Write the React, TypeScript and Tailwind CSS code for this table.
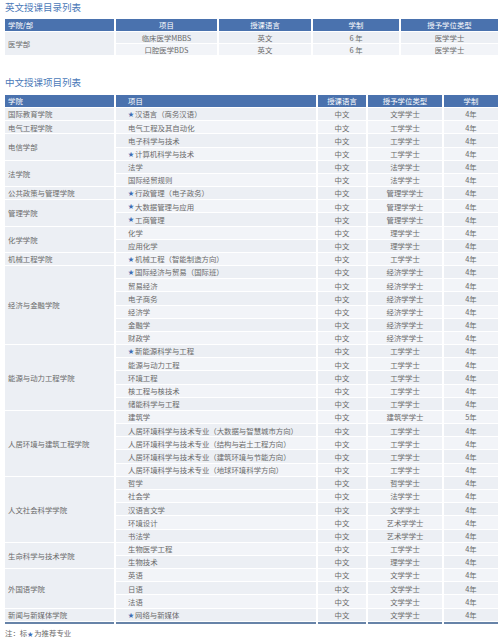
import React from "react";

type Row = { item: string; star?: boolean; degree: string; years?: string };
type Group = { school: string; rows: Row[] };

const groups: Group[] = [
  { school: "国际教育学院", rows: [{ item: "汉语言（商务汉语）", star: true, degree: "文学学士" }] },
  { school: "电气工程学院", rows: [{ item: "电气工程及其自动化", degree: "工学学士" }] },
  {
    school: "电信学部",
    rows: [
      { item: "电子科学与技术", degree: "工学学士" },
      { item: "计算机科学与技术", star: true, degree: "工学学士" },
    ],
  },
  {
    school: "法学院",
    rows: [
      { item: "法学", degree: "法学学士" },
      { item: "国际经贸规则", degree: "法学学士" },
    ],
  },
  { school: "公共政策与管理学院", rows: [{ item: "行政管理（电子政务）", star: true, degree: "管理学学士" }] },
  {
    school: "管理学院",
    rows: [
      { item: "大数据管理与应用", star: true, degree: "管理学学士" },
      { item: "工商管理", star: true, degree: "管理学学士" },
    ],
  },
  {
    school: "化学学院",
    rows: [
      { item: "化学", degree: "理学学士" },
      { item: "应用化学", degree: "理学学士" },
    ],
  },
  { school: "机械工程学院", rows: [{ item: "机械工程（智能制造方向）", star: true, degree: "工学学士" }] },
  {
    school: "经济与金融学院",
    rows: [
      { item: "国际经济与贸易（国际班）", star: true, degree: "经济学学士" },
      { item: "贸易经济", degree: "经济学学士" },
      { item: "电子商务", degree: "经济学学士" },
      { item: "经济学", degree: "经济学学士" },
      { item: "金融学", degree: "经济学学士" },
      { item: "财政学", degree: "经济学学士" },
    ],
  },
  {
    school: "能源与动力工程学院",
    rows: [
      { item: "新能源科学与工程", star: true, degree: "工学学士" },
      { item: "能源与动力工程", degree: "工学学士" },
      { item: "环境工程", degree: "工学学士" },
      { item: "核工程与核技术", degree: "工学学士" },
      { item: "储能科学与工程", degree: "工学学士" },
    ],
  },
  {
    school: "人居环境与建筑工程学院",
    rows: [
      { item: "建筑学", degree: "建筑学学士", years: "5年" },
      { item: "人居环境科学与技术专业（大数据与智慧城市方向）", degree: "工学学士" },
      { item: "人居环境科学与技术专业（结构与岩土工程方向）", degree: "工学学士" },
      { item: "人居环境科学与技术专业（建筑环境与节能方向）", degree: "工学学士" },
      { item: "人居环境科学与技术专业（地球环境科学方向）", degree: "工学学士" },
    ],
  },
  {
    school: "人文社会科学学院",
    rows: [
      { item: "哲学", degree: "哲学学士" },
      { item: "社会学", degree: "法学学士" },
      { item: "汉语言文学", degree: "文学学士" },
      { item: "环境设计", degree: "艺术学学士" },
      { item: "书法学", degree: "艺术学学士" },
    ],
  },
  {
    school: "生命科学与技术学院",
    rows: [
      { item: "生物医学工程", degree: "工学学士" },
      { item: "生物技术", degree: "理学学士" },
    ],
  },
  {
    school: "外国语学院",
    rows: [
      { item: "英语", degree: "文学学士" },
      { item: "日语", degree: "文学学士" },
      { item: "法语", degree: "文学学士" },
    ],
  },
  { school: "新闻与新媒体学院", rows: [{ item: "网络与新媒体", star: true, degree: "文学学士" }] },
];

const spanClass: Record<number, string> = {
  1: "row-span-1",
  2: "row-span-2",
  3: "row-span-3",
  5: "row-span-5",
  6: "row-span-6",
};

const font = "font-['Noto_Sans_CJK_SC','Noto_Sans',sans-serif]";
const head = "bg-[#4a72ae] text-white flex items-center";
const cellA = "bg-[#eceff4]";
const cellB = "bg-[#f2f4f8]";

const Star = () => <span className="text-[#3f6db3] text-[6px] mr-[1px]">★</span>;

export default function App() {
  let idx = 0;
  return (
    <div className={`${font} w-[500px] h-[640px] bg-white text-[#6a6a6a] text-[7.4px] leading-none pl-[5px] pr-[2px]`}>
      <h2 className="text-[9.5px] text-[#4b79b8] h-[17px] pt-[2px] leading-[10px]">英文授课目录列表</h2>

      <div className="grid grid-cols-[109px_101px_92px_86px_97px] gap-x-[2px] gap-y-[1px] grid-rows-[12px_11px_11px] mt-[2px]">
        <div className={`${head} pl-[3px]`}>学院/部</div>
        <div className={`${head} justify-center`}>项目</div>
        <div className={`${head} justify-center`}>授课语言</div>
        <div className={`${head} justify-center`}>学制</div>
        <div className={`${head} justify-center`}>授予学位类型</div>
        <div className={`${cellA} row-span-2 flex items-center pl-[3px]`}>医学部</div>
        <div className={`${cellA} flex items-center justify-center`}>临床医学MBBS</div>
        <div className={`${cellA} flex items-center justify-center`}>英文</div>
        <div className={`${cellA} flex items-center justify-center`}>6 年</div>
        <div className={`${cellA} flex items-center justify-center`}>医学学士</div>
        <div className={`${cellB} flex items-center justify-center`}>口腔医学BDS</div>
        <div className={`${cellB} flex items-center justify-center`}>英文</div>
        <div className={`${cellB} flex items-center justify-center`}>6 年</div>
        <div className={`${cellB} flex items-center justify-center`}>医学学士</div>
      </div>

      <h2 className="text-[9.5px] text-[#4b79b8] leading-[10px] mt-[22px] h-[18px]">中文授课项目列表</h2>

      <div className="grid grid-cols-[109px_200px_48px_74px_54px] gap-x-[2px] gap-y-[1px] grid-rows-[12px] auto-rows-[12.18px]">
        <div className={`${head} pl-[3px]`}>学院</div>
        <div className={`${head} pl-[12px]`}>项目</div>
        <div className={`${head} justify-center`}>授课语言</div>
        <div className={`${head} justify-center`}>授予学位类型</div>
        <div className={`${head} justify-center`}>学制</div>
        {groups.map((g) => (
          <React.Fragment key={g.school}>
            <div className={`${cellA} ${spanClass[g.rows.length]} col-start-1 flex items-center pl-[3px]`}>
              {g.school}
            </div>
            {g.rows.map((r) => {
              const bg = idx++ % 2 === 0 ? cellA : cellB;
              return (
                <React.Fragment key={r.item}>
                  <div className={`${bg} col-start-2 flex items-center pl-[12px] whitespace-nowrap`}>
                    {r.star && <Star />}
                    {r.item}
                  </div>
                  <div className={`${bg} flex items-center justify-center`}>中文</div>
                  <div className={`${bg} flex items-center justify-center`}>{r.degree}</div>
                  <div className={`${bg} flex items-center justify-center`}>{r.years ?? "4年"}</div>
                </React.Fragment>
              );
            })}
          </React.Fragment>
        ))}
      </div>
      <div className="grid grid-cols-[109px_200px_48px_74px_54px] gap-x-[2px] mt-[1px]">
        <div className="h-[2px] bg-[#6783a8]" />
        <div className="h-[2px] bg-[#6783a8]" />
        <div className="h-[2px] bg-[#6783a8]" />
        <div className="h-[2px] bg-[#6783a8]" />
        <div className="h-[2px] bg-[#6783a8]" />
      </div>
      <p className="mt-[5px] text-[7.4px]">
        注：标<Star />为推荐专业
      </p>
    </div>
  );
}
